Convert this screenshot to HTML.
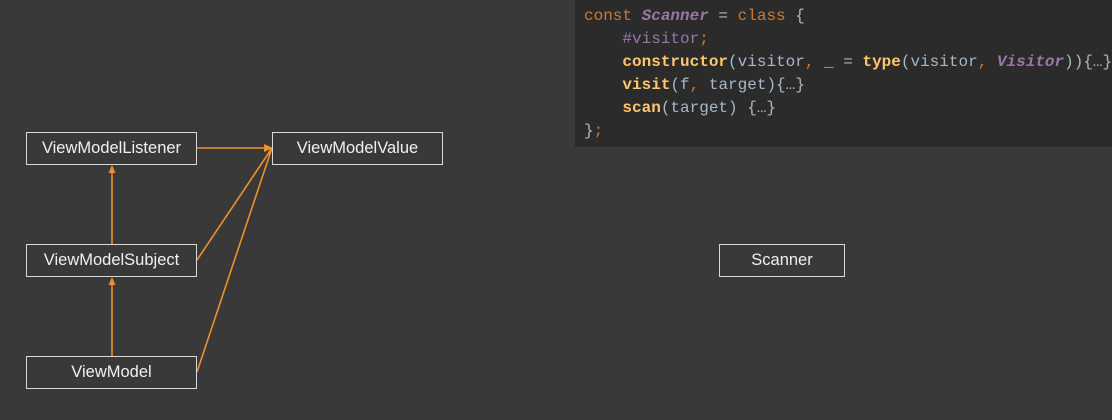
<!DOCTYPE html>
<html><head><style>
html,body{margin:0;padding:0}
body{width:1112px;height:420px;background:#393939;position:relative;overflow:hidden;font-family:"Liberation Sans","Noto Sans CJK KR",sans-serif}
.box{position:absolute;box-sizing:border-box;border:1.5px solid #d8d8d8;color:#f0f0f0;font-size:16.5px;display:flex;align-items:center;justify-content:center;height:33px}
#code{position:absolute;left:575px;top:0;width:537px;height:147px;background:#2b2b2b;font-family:"Liberation Mono",monospace;font-size:16px;line-height:23px;color:#a9b7c6;padding:5px 0 0 9px;box-sizing:border-box;white-space:pre}
.k{color:#cc7832}.p{color:#9876aa}.i{color:#9876aa;font-style:italic;font-weight:bold}.f{color:#ffc66d;font-weight:bold}
</style></head><body>
<div id="code"><span class="k">const </span><span class="i">Scanner</span> = <span class="k">class</span> {
    <span class="p">#visitor</span><span class="k">;</span>
    <span class="f">constructor</span>(visitor<span class="k">,</span> _ = <span class="f">type</span>(visitor<span class="k">,</span> <span class="i">Visitor</span>)){…}
    <span class="f">visit</span>(f<span class="k">,</span> target){…}
    <span class="f">scan</span>(target) {…}
}<span class="k">;</span></div>
<svg width="1112" height="420" style="position:absolute;left:0;top:0">
<g stroke="#f0902a" stroke-width="1.6" fill="none">
<line x1="197" y1="148" x2="272" y2="148"/>
<line x1="197" y1="260" x2="272" y2="148"/>
<line x1="197" y1="372" x2="272" y2="148"/>
<line x1="112" y1="244" x2="112" y2="168"/>
<line x1="112" y1="356" x2="112" y2="280"/>
</g>
<g fill="#f0902a">
<polygon points="112,165 108.5,173 115.5,173"/>
<polygon points="112,277 108.5,285 115.5,285"/>
<polygon points="273,148 264,144 264,152"/>
</g>
</svg>
<div class="box" style="left:26px;top:132px;width:171px">ViewModelListener</div>
<div class="box" style="left:272px;top:132px;width:171px">ViewModelValue</div>
<div class="box" style="left:26px;top:244px;width:171px">ViewModelSubject</div>
<div class="box" style="left:26px;top:356px;width:171px">ViewModel</div>
<div class="box" style="left:719px;top:244px;width:126px">Scanner</div>
</body></html>
